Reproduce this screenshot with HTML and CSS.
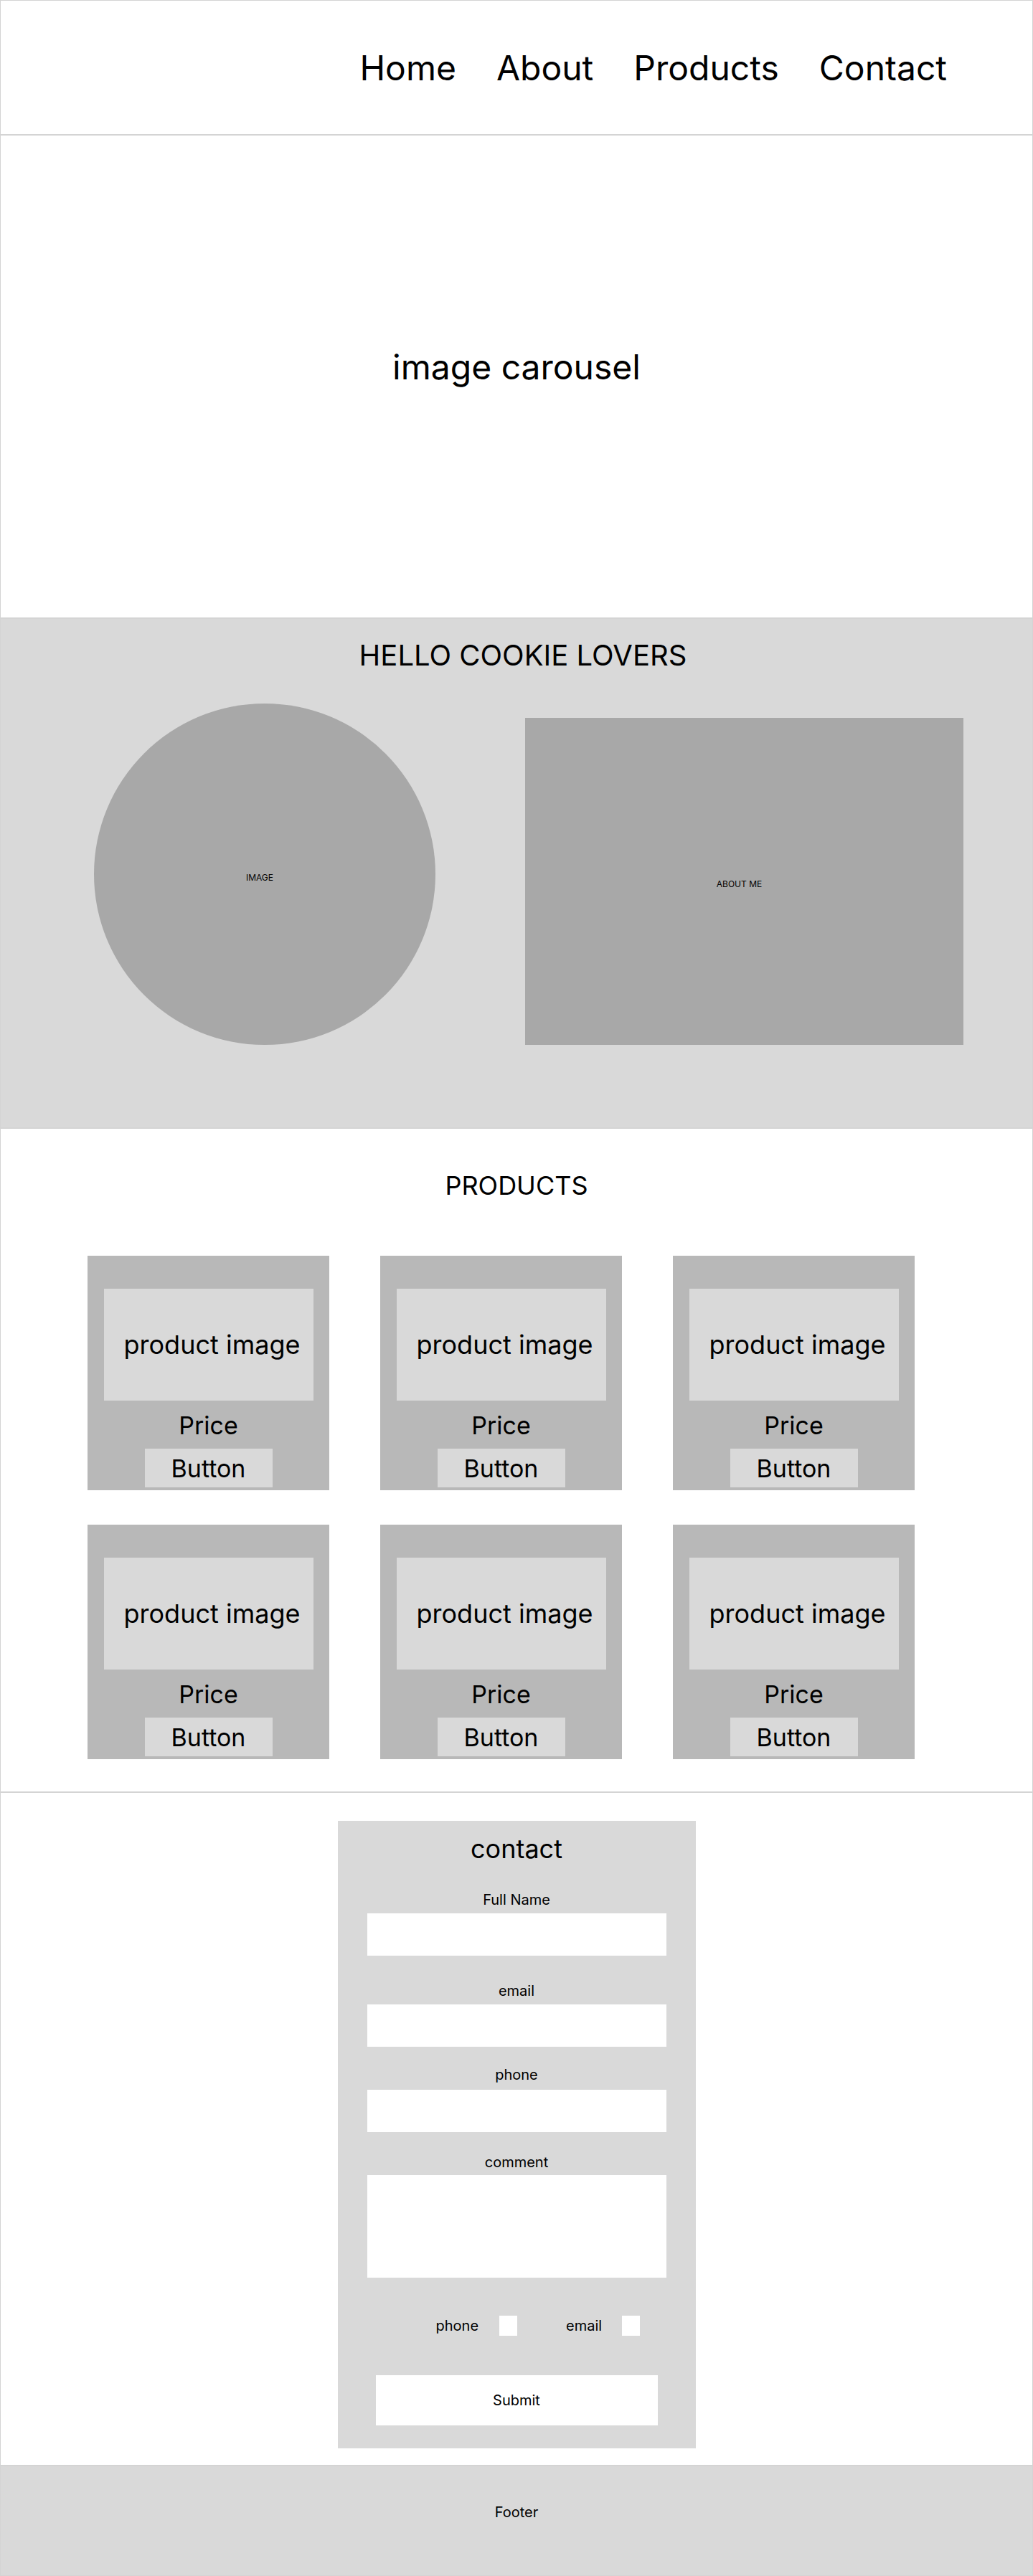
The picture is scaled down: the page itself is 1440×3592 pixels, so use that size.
FILE: index.html
```html
<!DOCTYPE HTML>
<html>
<head>
<title>Hello Cookie Lovers</title>
<link rel="stylesheet" href="styles.css">
</head>
<body>
  <!-- 导航 -->
  <header class="section header">
    <ul class="nav">
      <li><a href="#">Home</a></li>
      <li><a href="#">About</a></li>
      <li><a href="#">Products</a></li>
      <li><a href="#">Contact</a></li>
    </ul>
  </header>

  <!-- 轮播图 -->
  <section class="section carousel">image carousel</section>

  <!-- 关于 -->
  <section class="section about">
    <h1 class="about-title">HELLO COOKIE LOVERS</h1>
    <div class="about-row">
      <div class="about-image">IMAGE</div>
      <div class="about-text">ABOUT ME</div>
    </div>
  </section>

  <!-- 产品 -->
  <section class="section products">
    <h2 class="products-title">PRODUCTS</h2>
    <div class="product-grid">
      <div class="card">
        <div class="card-image">product image</div>
        <div class="card-price">Price</div>
        <button class="card-button">Button</button>
      </div>
      <div class="card">
        <div class="card-image">product image</div>
        <div class="card-price">Price</div>
        <button class="card-button">Button</button>
      </div>
      <div class="card">
        <div class="card-image">product image</div>
        <div class="card-price">Price</div>
        <button class="card-button">Button</button>
      </div>
      <div class="card">
        <div class="card-image">product image</div>
        <div class="card-price">Price</div>
        <button class="card-button">Button</button>
      </div>
      <div class="card">
        <div class="card-image">product image</div>
        <div class="card-price">Price</div>
        <button class="card-button">Button</button>
      </div>
      <div class="card">
        <div class="card-image">product image</div>
        <div class="card-price">Price</div>
        <button class="card-button">Button</button>
      </div>
    </div>
  </section>

  <!-- 联系表单 -->
  <section class="section contact">
    <form class="contact-form">
      <h2 class="contact-title">contact</h2>
      <div class="field">
        <label for="name">Full Name</label>
        <input type="text" id="name">
      </div>
      <div class="field">
        <label for="email">email</label>
        <input type="text" id="email">
      </div>
      <div class="field field-phone">
        <label for="phone">phone</label>
        <input type="text" id="phone">
      </div>
      <div class="field field-comment">
        <label for="comment">comment</label>
        <textarea id="comment"></textarea>
      </div>
      <div class="check-row">
        <span>phone</span>
        <input type="checkbox" class="check check-first">
        <span class="check-label">email</span>
        <input type="checkbox" class="check">
      </div>
      <button type="button" class="submit">Submit</button>
    </form>
  </section>

  <!-- 页脚 -->
  <footer class="section footer">Footer</footer>
</body>
</html>
```

FILE: styles.css
```css
/* 页面基础 */
* { box-sizing: border-box; }
body {
    margin: 0;
    font-family: Inter, "Noto Sans", sans-serif;
    color: #000;
    background: #fff;
}
.section { border: 1px solid #d4d4d4; }

/* 导航 */
.header {
    height: 188px;
    display: flex;
    align-items: center;
    justify-content: flex-end;
    padding-right: 119px;
}
.nav {
    list-style: none; margin: 0; padding: 0;
    display: flex; gap: 56px;
    font-size: 48px;
}
.nav a { color: #000; text-decoration: none; }

/* 轮播图 */
.carousel {
    height: 674px;
    display: flex; align-items: center; justify-content: center;
    padding-bottom: 28px;
    font-size: 48px;
}

/* 关于 */
.about {
    height: 711px;
    background: #d9d9d9;
    padding-top: 26px;
}
.about-title {
    margin: 0; font-size: 40px; font-weight: 400;
    text-align: center;
    padding-left: 18px;
}
.about-row {
    display: flex; align-items: flex-end; gap: 125px;
    margin-top: 43px;
    padding-left: 130px;
}
.about-image, .about-text {
    background: #a8a8a8;
    display: flex; align-items: center; justify-content: center;
    font-size: 12px;
}
.about-image { width: 476px; height: 476px; border-radius: 50%; padding: 8px 14px 0 0; }
.about-text { width: 611px; height: 456px; padding: 6px 14px 0 0; }

/* 产品 */
.products { height: 926px; padding-top: 57px; }
.products-title {
    margin: 0; font-size: 36px; font-weight: 400;
    text-align: center;
}
.product-grid {
    display: grid;
    grid-template-columns: repeat(3, 337px);
    gap: 48px 71px;
    margin-top: 76px;
    padding-left: 121px;
}
.card {
    height: 327px;
    background: #b8b8b8;
    display: flex; flex-direction: column; align-items: center;
    padding-top: 46px;
}
.card-image {
    width: 292px; height: 156px;
    background: #d9d9d9;
    display: flex; align-items: center; justify-content: center;
    padding-left: 10px;
    font-size: 36px;
}
.card-price { margin-top: 14px; font-size: 34px; line-height: 41px; }
.card-button {
    margin-top: 12px;
    width: 178px; height: 54px;
    border: none; padding: 0;
    background: #d9d9d9;
    font-family: inherit; font-size: 34px; color: #000;
}

/* 联系表单 */
.contact { height: 939px; padding-top: 39px; }
.contact-form {
    width: 499px; height: 875px;
    margin: 0 auto;
    background: #d9d9d9;
    padding: 17px 41px 31px;
    display: flex; flex-direction: column;
}
.contact-title {
    margin: 0; font-size: 36px; font-weight: 400;
    text-align: center;
}
.field { margin-top: 37px; }
.field-phone { margin-top: 27px; }
.field-comment { margin-top: 30px; }
.field label {
    display: block;
    font-size: 20px; line-height: 24px;
    text-align: center;
    margin-bottom: 7px;
}
.field input, .field textarea {
    display: block; width: 100%; height: 59px;
    border: none; margin: 0;
    background: #fff;
}
.field textarea { height: 143px; resize: none; }
.field-comment label { margin-bottom: 6px; }
.field-phone label { margin-bottom: 9px; }

.check-row {
    display: flex; align-items: center;
    margin-top: 53px;
    padding-left: 96px;
    font-size: 20px; line-height: 24px;
}
.check {
    appearance: none; -webkit-appearance: none;
    width: 25px; height: 28px; margin: 0 0 0 28px;
    background: #fff; border: none;
}
.check-first { margin-left: 29px; }
.check-label { margin-left: 68px; }

.submit {
    align-self: center;
    margin-top: 55px;
    width: 393px; height: 70px;
    border: none; background: #fff;
    font-family: inherit; font-size: 20px; color: #000;
}

/* 页脚 */
.footer {
    height: 154px;
    background: #d9d9d9;
    padding-top: 52px;
    text-align: center;
    font-size: 20px; line-height: 24px;
}
```
